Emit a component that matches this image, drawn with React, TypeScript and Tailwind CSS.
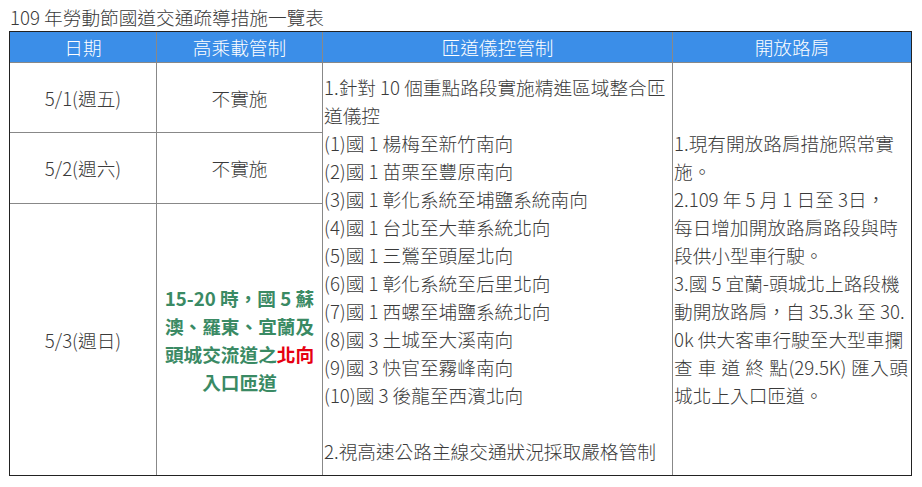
import React from 'react';

const rampLines = [
  '1.針對 10 個重點路段實施精進區域整合匝',
  '道儀控',
  '(1)國 1 楊梅至新竹南向',
  '(2)國 1 苗栗至豐原南向',
  '(3)國 1 彰化系統至埔鹽系統南向',
  '(4)國 1 台北至大華系統北向',
  '(5)國 1 三鶯至頭屋北向',
  '(6)國 1 彰化系統至后里北向',
  '(7)國 1 西螺至埔鹽系統北向',
  '(8)國 3 土城至大溪南向',
  '(9)國 3 快官至霧峰南向',
  '(10)國 3 後龍至西濱北向',
  '\u00a0',
  '2.視高速公路主線交通狀況採取嚴格管制',
];

const shoulderLines = [
  '1.現有開放路肩措施照常實',
  '施。',
  '2.109 年 5 月 1 日至 3日，',
  '每日增加開放路肩路段與時',
  '段供小型車行駛。',
  '3.國 5 宜蘭-頭城北上路段機',
  '動開放路肩，自 35.3k 至 30.',
  '0k 供大客車行駛至大型車攔',
];

const App: React.FC = () => {
  return (
    <div className="w-[922px] h-[487px] bg-white text-[#3a3a3a] text-[18.67px] font-light font-['Noto_Sans_CJK_TC',sans-serif]">
      <div className="h-[31px] pl-[10px] pt-[3px] leading-[28px] whitespace-nowrap">109 年勞動節國道交通疏導措施一覽表</div>

      <div className="ml-[9px] w-[903px] border border-[#222] grid grid-cols-[146px_166px_350px_239px] grid-rows-[30px_70px_71px_272px]">
        {/* header */}
        <div className="bg-[#3b8ee8] text-white flex items-center justify-center">日期</div>
        <div className="bg-[#3b8ee8] text-white flex items-center justify-center border-l border-[#888]">高乘載管制</div>
        <div className="bg-[#3b8ee8] text-white flex items-center justify-center border-l border-[#888]">匝道儀控管制</div>
        <div className="bg-[#3b8ee8] text-white flex items-center justify-center border-l border-[#888]">開放路肩</div>

        {/* 5/1 */}
        <div className="col-start-1 row-start-2 border-t border-[#888] flex items-center justify-center">5/1(週五)</div>
        <div className="col-start-2 row-start-2 border-t border-l border-[#888] flex items-center justify-center">不實施</div>

        {/* ramp metering, spans all body rows */}
        <div className="col-start-3 row-start-2 row-span-3 border-t border-l border-[#888] flex flex-col justify-center pl-px overflow-hidden leading-[28px]">
          {rampLines.map((line, i) => (
            <div key={i} className="whitespace-nowrap">{line}</div>
          ))}
        </div>

        {/* shoulder, spans all body rows */}
        <div className="col-start-4 row-start-2 row-span-3 border-t border-l border-[#888] flex flex-col justify-center pl-px overflow-hidden leading-[28px]">
          {shoulderLines.map((line, i) => (
            <div key={i} className="whitespace-nowrap">{line}</div>
          ))}
          <div className="whitespace-nowrap text-justify [text-align-last:justify] pr-[3px]">查 車 道 終 點(29.5K) 匯入頭</div>
          <div className="whitespace-nowrap">城北上入口匝道。</div>
        </div>

        {/* 5/2 */}
        <div className="col-start-1 row-start-3 border-t border-[#888] flex items-center justify-center">5/2(週六)</div>
        <div className="col-start-2 row-start-3 border-t border-l border-[#888] flex items-center justify-center">不實施</div>

        {/* 5/3 */}
        <div className="col-start-1 row-start-4 border-t border-[#888] flex items-center justify-center">5/3(週日)</div>
        <div className="col-start-2 row-start-4 border-t border-l border-[#888] flex flex-col items-center justify-center font-bold text-[#3a8a64] leading-[28px]">
          <div className="whitespace-nowrap">15-20 時，國 5 蘇</div>
          <div className="whitespace-nowrap">澳、羅東、宜蘭及</div>
          <div className="whitespace-nowrap">
            頭城交流道之<span className="text-[#e60012]">北向</span>
          </div>
          <div className="whitespace-nowrap">入口匝道</div>
        </div>
      </div>
    </div>
  );
};

export default App;
